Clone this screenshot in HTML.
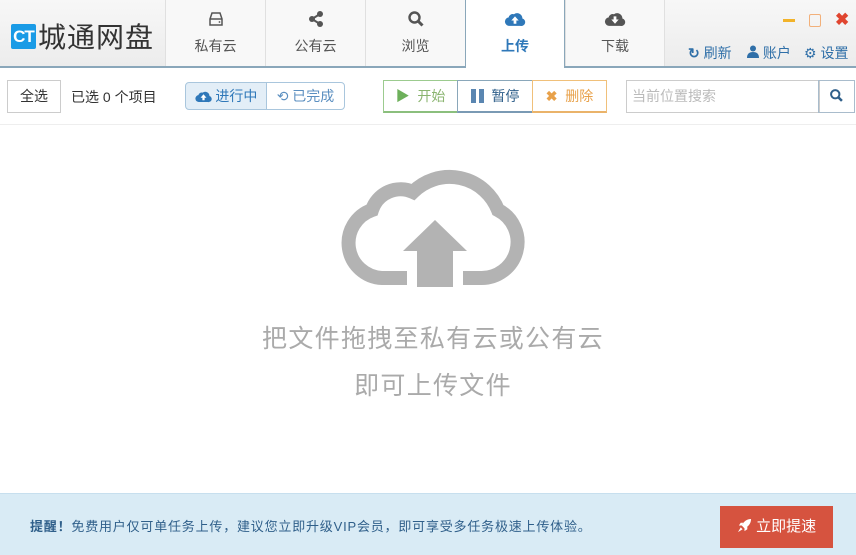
<!DOCTYPE html>
<html><head><meta charset="utf-8"><style>
*{margin:0;padding:0;box-sizing:border-box}
body{width:856px;height:555px;overflow:hidden;background:#fff;font-family:"Liberation Sans","Noto Sans CJK SC",sans-serif;position:relative;color:#333}
.hdr{position:absolute;left:0;top:0;width:856px;height:68px;background:linear-gradient(#f7f7f7,#ececec);border-bottom:2px solid #8aa7ba}
.logo{position:absolute;left:11px;top:16px;display:flex;align-items:center}
.ct{background:#1a9be6;color:#fff;font-weight:bold;font-size:17px;width:25px;height:25px;line-height:25px;text-align:center;letter-spacing:-1px;border-radius:2px}
.lt{font-size:28px;color:#333;margin-left:2px;letter-spacing:1px}
.tab{position:absolute;top:0;width:100px;height:66px;border-left:1px solid #e0e0e0;background:#f8f8f8;text-align:center;font-size:14px;color:#555}
.tab .ic{position:absolute;left:0;right:0;top:10px;height:18px}
.tab .tx{position:absolute;left:0;right:0;top:36px}
.tab.act{background:#fff;height:68px;border-left:1px solid #8aa7ba;border-right:1px solid #8aa7ba;color:#2f78b9;font-weight:bold;z-index:2}
.win{position:absolute;top:12px;font-size:16px}
.rl{position:absolute;top:43px;font-size:14px;color:#2f6fa8}
.btn{position:absolute;top:80px;height:33px;border:1px solid #ccc;font-size:14px;line-height:31px;text-align:center}
.foot{position:absolute;left:0;top:493px;width:856px;height:62px;background:#d9ebf5;border-top:1px solid #c7dfee}
</style></head><body>
<div class="hdr">
 <div class="logo"><div class="ct">CT</div><div class="lt">城通网盘</div></div>
 <div class="tab" style="left:165px"><div class="ic"><svg width="18" height="18" viewBox="0 0 18 18"><path d="M3 9 L5 3 H13 L15 9 V15 H3 Z M3 9 H15" fill="none" stroke="#555" stroke-width="1.5"/><circle cx="12.5" cy="12" r="0.9" fill="#555"/></svg></div><div class="tx">私有云</div></div>
 <div class="tab" style="left:265px"><div class="ic"><svg width="18" height="18" viewBox="0 0 18 18"><circle cx="13" cy="4" r="3" fill="#555"/><circle cx="5" cy="9" r="3" fill="#555"/><circle cx="13" cy="14" r="3" fill="#555"/><path d="M5 9 L13 4 M5 9 L13 14" stroke="#555" stroke-width="2"/></svg></div><div class="tx">公有云</div></div>
 <div class="tab" style="left:365px"><div class="ic"><svg width="18" height="18" viewBox="0 0 18 18"><circle cx="7.5" cy="7.5" r="5" fill="none" stroke="#555" stroke-width="2.4"/><path d="M11 11 L15.5 15.5" stroke="#555" stroke-width="3"/></svg></div><div class="tx">浏览</div></div>
 <div class="tab act" style="left:465px"><div class="ic"><svg width="22" height="19" viewBox="0 0 20 18"><path d="M5 15 A4 4 0 0 1 4 7 A4 4 0 0 1 9 4 A5 5 0 0 1 17 8 A3.5 3.5 0 0 1 15 15 Z" fill="#2f78b9"/><path d="M10 6 L13.5 10 H11.3 V13 H8.7 V10 H6.5 Z" fill="#fff"/></svg></div><div class="tx">上传</div></div>
 <div class="tab" style="left:565px;border-right:1px solid #e0e0e0"><div class="ic"><svg width="22" height="19" viewBox="0 0 20 18"><path d="M5 15 A4 4 0 0 1 4 7 A4 4 0 0 1 9 4 A5 5 0 0 1 17 8 A3.5 3.5 0 0 1 15 15 Z" fill="#555"/><path d="M10 13 L13.5 9 H11.3 V6 H8.7 V9 H6.5 Z" fill="#fff"/></svg></div><div class="tx">下载</div></div>
 <div class="win" style="left:783px;top:19px;width:12px;height:3px;background:#f2b32a"></div>
 <div class="win" style="left:809px;top:14px;width:12px;height:13px;border:1.5px solid #f2b07a;border-radius:2px"></div>
 <div class="win" style="left:835px;top:10px;color:#e0452f;font-weight:bold;font-size:17px">✖</div>
 <div class="rl" style="left:688px"><span style="font-weight:bold">↻</span> 刷新</div>
 <div class="rl" style="left:747px"><svg width="12" height="13" viewBox="0 0 12 13"><circle cx="6" cy="3.5" r="3" fill="#2f6fa8"/><path d="M0 13 Q0 7 6 7 Q12 7 12 13Z" fill="#2f6fa8"/></svg> 账户</div>
 <div class="rl" style="left:804px">⚙ 设置</div>
</div>

<div class="btn" style="left:7px;width:54px;color:#333">全选</div>
<div style="position:absolute;left:71px;top:87px;font-size:14px;color:#333">已选 0 个项目</div>
<div class="btn" style="left:185px;width:82px;top:82px;height:28px;line-height:26px;border-color:#a9c6dd;background:#e3eef7;border-radius:4px 0 0 4px;color:#2f78b9">
 <svg width="17" height="14" viewBox="0 0 20 16" style="vertical-align:-2px"><path d="M5 15 A4 4 0 0 1 4 7 A4 4 0 0 1 9 4 A5 5 0 0 1 17 8 A3.5 3.5 0 0 1 15 15 Z" fill="#2f78b9"/><path d="M10 6 L13.5 10 H11.3 V13 H8.7 V10 H6.5 Z" fill="#fff"/></svg> 进行中</div>
<div class="btn" style="left:266px;width:79px;top:82px;height:28px;line-height:26px;border-color:#a9c6dd;border-radius:0 4px 4px 0;color:#5b8fc0">⟲ 已完成</div>

<div class="btn" style="left:383px;width:75px;border-color:#9ccb8f;border-bottom:2px solid #8bbf7d;color:#8ab46f"><span style="color:#6db05b">▶</span>&nbsp; 开始</div>
<div class="btn" style="left:457px;width:76px;border-color:#8aa7ba;border-bottom:2px solid #7a9ab4;color:#2f5f8a"><span style="display:inline-block;width:5px;height:14px;background:#5a86b1;vertical-align:-2px"></span><span style="display:inline-block;width:5px;height:14px;background:#5a86b1;vertical-align:-2px;margin-left:3px"></span>&nbsp; 暂停</div>
<div class="btn" style="left:532px;width:75px;border-color:#f0c07a;border-bottom:2px solid #eab36a;color:#e8a14a"><b>✖</b>&nbsp; 删除</div>

<div class="btn" style="left:626px;width:194px;text-align:left;padding-left:5px;color:#bbb">当前位置搜索</div>
<div class="btn" style="left:818px;width:37px;border-color:#a9bccc"><svg width="15" height="15" viewBox="0 0 18 18" style="vertical-align:-2px"><circle cx="7.5" cy="7.5" r="5" fill="none" stroke="#2f5f8a" stroke-width="2.4"/><path d="M11 11 L15.5 15.5" stroke="#2f5f8a" stroke-width="3"/></svg></div>
<div style="position:absolute;left:0;top:124px;width:856px;height:1px;background:#eee"></div>

<svg style="position:absolute;left:0;top:0" width="856" height="555">
 <path d="M407 278 H382 A35 35 0 0 1 372 210 A30 30 0 0 1 413 192 A52 52 0 0 1 498 210 A36 36 0 0 1 480 278 H463" fill="none" stroke="#b3b3b3" stroke-width="14"/>
 <path d="M435 220 L467 251 H453 V287 H417 V251 H403 Z" fill="#b3b3b3"/>
</svg>
<div style="position:absolute;left:0;width:866px;top:319px;text-align:center;font-size:25px;color:#aaa;letter-spacing:1.3px">把文件拖拽至私有云或公有云</div>
<div style="position:absolute;left:0;width:866px;top:366px;text-align:center;font-size:25px;color:#aaa;letter-spacing:1.3px">即可上传文件</div>

<div class="foot">
 <div style="position:absolute;left:30px;top:22px;font-size:13px;color:#2f5f8a;letter-spacing:0.8px"><b>提醒！</b>免费用户仅可单任务上传，建议您立即升级VIP会员，即可享受多任务极速上传体验。</div>
 <div style="position:absolute;left:720px;top:12px;width:113px;height:42px;background:#d6533f;color:#fff;font-size:15px;line-height:42px;text-align:center"><svg width="15" height="15" viewBox="0 0 16 16" style="vertical-align:-2px"><path d="M15 1 C10 1 7 4 5 8 L8 11 C12 9 15 6 15 1 Z M5 8 L2 8 L4 5 L7 5 Z M8 11 L8 14 L11 12 L11 9 Z M4 10 L1 15 L6 12 Z" fill="#fff"/></svg> 立即提速</div>
</div>
</body></html>
